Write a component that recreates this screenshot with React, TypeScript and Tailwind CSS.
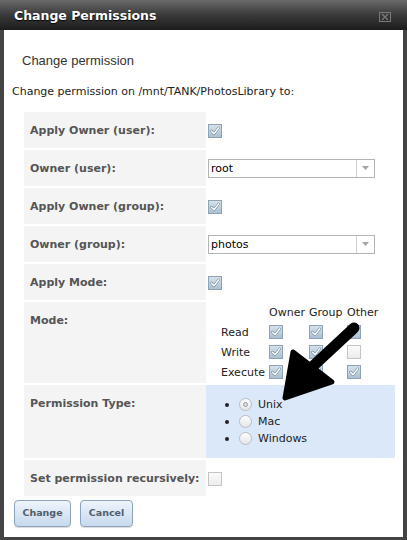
import type { ReactNode } from "react";

const verdana = { fontFamily: '"DejaVu Sans", Verdana, sans-serif' };

function Check({ checked = true }: { checked?: boolean }) {
  return (
    <svg width="14" height="14" viewBox="0 0 14 14" className="block shrink-0">
      <defs>
        <linearGradient id={checked ? "cbOn" : "cbOff"} x1="0" y1="0" x2="0" y2="1">
          <stop offset="0" stopColor={checked ? "#d7e3ee" : "#fbfbfb"} />
          <stop offset="1" stopColor={checked ? "#a9bfd2" : "#ececec"} />
        </linearGradient>
      </defs>
      <rect x="0.5" y="0.5" width="13" height="13" fill={`url(#${checked ? "cbOn" : "cbOff"})`} stroke={checked ? "#8ea2b4" : "#c4c4c4"} />
      {checked && (
        <>
          <path d="M3.5 7.2 L6 9.8 L10.8 3.8" fill="none" stroke="#6f8598" strokeWidth="2.6" strokeLinecap="round" strokeLinejoin="round" />
          <path d="M3.5 7.2 L6 9.8 L10.8 3.8" fill="none" stroke="#ffffff" strokeWidth="1.4" strokeLinecap="round" strokeLinejoin="round" />
        </>
      )}
    </svg>
  );
}

function Radio({ on = false }: { on?: boolean }) {
  return (
    <span className="relative flex h-[13px] w-[13px] items-center justify-center rounded-full border border-[#b8bcc2] bg-gradient-to-b from-[#fdfdfd] to-[#e4e6e9]">
      {on && <span className="h-[5px] w-[5px] rounded-full border border-[#9aa0a6] bg-[#d8dade]" />}
    </span>
  );
}

function Select({ value }: { value: string }) {
  return (
    <div className="flex h-[19px] w-[167px] items-stretch border border-[#b3b3b3] bg-white">
      <span className="flex-1 pl-[2px] text-[11px] leading-[17px] text-black" style={verdana}>
        {value}
      </span>
      <span className="flex w-[18px] items-center justify-center border-l border-[#cfcfcf]">
        <svg width="7" height="4" viewBox="0 0 7 4">
          <path d="M0 0 H7 L3.5 4 Z" fill="#a4a4a4" />
        </svg>
      </span>
    </div>
  );
}

function Row({ label, children, blue, top }: { label: string; children: ReactNode; blue?: boolean; top?: boolean }) {
  return (
    <div className="flex">
      <div
        className="w-[182px] shrink-0 bg-[#f4f4f4] px-[6px] pt-[12px] pb-[11px] text-[11px] font-bold leading-[13px] text-[#555]"
        style={verdana}
      >
        {label}
      </div>
      <div className={`flex flex-1 pl-[2px] ${top ? "items-start" : "items-center"} ${blue ? "bg-[#dae8fa]" : ""}`}>
        {children}
      </div>
    </div>
  );
}

export default function App() {
  const modes: { name: string; vals: boolean[] }[] = [
    { name: "Read", vals: [true, true, true] },
    { name: "Write", vals: [true, true, false] },
    { name: "Execute", vals: [true, true, true] },
  ];
  const types = ["Unix", "Mac", "Windows"];

  return (
    <div className="relative h-[540px] w-[407px] overflow-hidden bg-[#444] px-[4px] pb-[3px]">
      {/* title bar */}
      <div className="-mx-[4px] flex h-[30px] items-center justify-between bg-gradient-to-b from-[#6a6a6a] via-[#3a3a3a] to-[#1c1c1c] pt-[3px] pl-[14px] pr-[16px]">
        <span className="text-[12.5px] font-bold text-white [text-shadow:0_1px_1px_#000]" style={verdana}>
          Change Permissions
        </span>
        <svg width="12" height="10" viewBox="0 0 12 10">
          <rect x="0.5" y="0.5" width="11" height="9" fill="none" stroke="#7a7a7a" />
          <path d="M3 2 L9 8 M9 2 L3 8" stroke="#7a7a7a" strokeWidth="1.3" />
        </svg>
      </div>

      {/* body */}
      <div className="flex h-[507px] flex-col bg-white">
        <div className="pl-[18px] pt-[23px] text-[13px] leading-[16px] text-[#333]" style={{ fontFamily: '"Liberation Sans", Arial, sans-serif' }}>
          Change permission
        </div>
        <div className="pl-[8px] pt-[16px] text-[11px] leading-[14px] text-[#222]" style={verdana}>
          Change permission on /mnt/TANK/PhotosLibrary to:
        </div>

        <div className="mt-[13px] ml-[20px] mr-[8px] flex flex-col gap-[2px]">
          <Row label="Apply Owner (user):">
            <span className="mt-[2px]"><Check /></span>
          </Row>
          <Row label="Owner (user):">
            <Select value="root" />
          </Row>
          <Row label="Apply Owner (group):">
            <span className="mt-[2px]"><Check /></span>
          </Row>
          <Row label="Owner (group):">
            <Select value="photos" />
          </Row>
          <Row label="Apply Mode:">
            <span className="mt-[2px]"><Check /></span>
          </Row>
          <Row label="Mode:" top>
            <div className="ml-[13px] pt-[4px] pb-[1px] text-[11px] text-[#222]" style={verdana}>
              <div className="grid grid-cols-[48px_40px_38px_auto] leading-[13px]">
                <span />
                <span>Owner</span>
                <span>Group</span>
                <span>Other</span>
              </div>
              <div className="mt-[3px]">
                {modes.map((m) => (
                  <div key={m.name} className="grid h-[20px] grid-cols-[48px_40px_38px_auto] items-center">
                    <span className="leading-[13px]">{m.name}</span>
                    {m.vals.map((v, i) => (
                      <Check key={i} checked={v} />
                    ))}
                  </div>
                ))}
              </div>
            </div>
          </Row>
          <Row label="Permission Type:" blue top>
            <div className="flex flex-col pl-[17px] pt-[11px] pb-[11px] text-[11px] text-[#222]" style={verdana}>
              {types.map((t, i) => (
                <div key={t} className="flex h-[17px] items-center">
                  <span className="h-[4px] w-[4px] rounded-full bg-[#222]" />
                  <span className="ml-[10px]"><Radio on={i === 0} /></span>
                  <span className="ml-[6px] leading-[13px]">{t}</span>
                </div>
              ))}
            </div>
          </Row>
          <Row label="Set permission recursively:">
            <span className="mt-[2px]"><Check checked={false} /></span>
          </Row>
        </div>

        <div className="mt-[4px] ml-[10px] flex gap-[9px]">
          {[
            { label: "Change", w: "w-[57px]" },
            { label: "Cancel", w: "w-[53px]" },
          ].map((b) => (
            <button
              key={b.label}
              className={`h-[27px] ${b.w} rounded-[4px] border border-[#8ea3bc] bg-gradient-to-b from-[#eef4fb] to-[#c6d9ee] text-[9.5px] font-bold text-[#4f5d6d] shadow-[0_1px_1px_rgba(0,0,0,0.15)]`}
              style={verdana}
            >
              {b.label}
            </button>
          ))}
        </div>
      </div>

      {/* annotation arrow drawn over the screenshot */}
      <svg className="pointer-events-none absolute inset-0" width="407" height="540" viewBox="0 0 407 540">
        <path d="M354 328 L311 368" stroke="#000" strokeWidth="11" strokeLinecap="round" />
        <path d="M293 352 L332 382 L285 398 Z" fill="#000" stroke="#000" strokeWidth="5" strokeLinejoin="round" />
      </svg>
    </div>
  );
}
